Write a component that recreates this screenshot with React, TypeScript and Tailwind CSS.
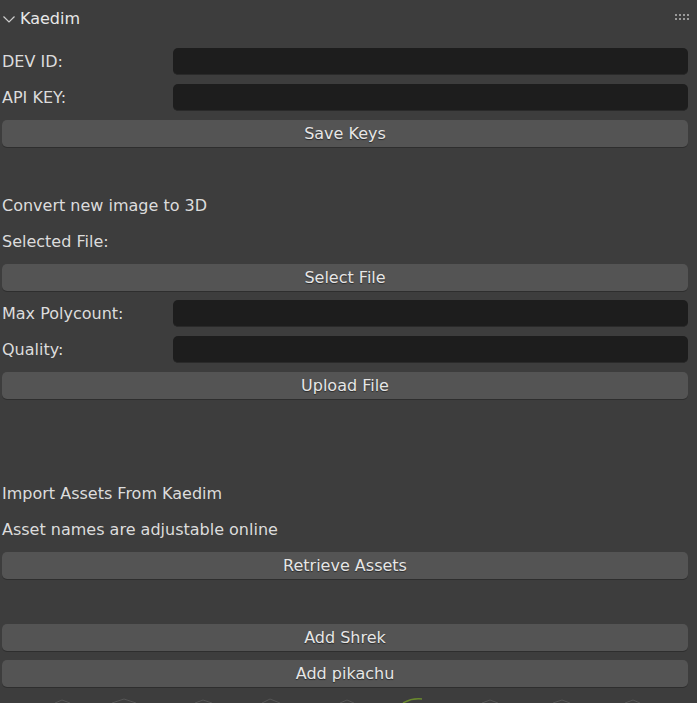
import React from "react";

const font = { fontFamily: '"DejaVu Sans", "Liberation Sans", sans-serif' };

function Label({ children }: { children: React.ReactNode }) {
  return <div className="h-[36px] flex items-center pt-[2px] text-[16px] text-[#dcdcdc]">{children}</div>;
}

function Field({ label }: { label: string }) {
  return (
    <div className="h-[36px] flex items-center">
      <div className="w-[171px] pt-[2px] text-[16px] text-[#dcdcdc]">{label}</div>
      <div className="flex-1 h-[27px] rounded-[5px] bg-[#1d1d1d] border-b border-[#2a2a2a]" />
    </div>
  );
}

function Button({ children }: { children: React.ReactNode }) {
  return (
    <div className="h-[36px] flex items-center">
      <div className="flex-1 h-[27px] rounded-[5px] bg-[#545454] shadow-[0_1px_0_#2e2e2e] flex items-center justify-center pt-[2px] text-[16px] text-[#e6e6e6] [text-shadow:0_1px_1px_rgba(0,0,0,0.5)]">
        {children}
      </div>
    </div>
  );
}

function Spacer() {
  return <div className="h-[36px]" />;
}

export default function App() {
  return (
    <div className="w-[697px] h-[703px] bg-[#3d3d3d] overflow-hidden flex flex-col" style={font}>
      <div className="h-[36px] flex items-center pl-[2px] pr-[8px] pt-[1px]">
        <svg width="14" height="14" viewBox="0 0 14 14" className="mr-[4px]">
          <path d="M1.5 4.5 L7 10 L12.5 4.5" fill="none" stroke="#cfcfcf" strokeWidth="1.2" />
        </svg>
        <span className="text-[16px] text-[#e8e8e8]">Kaedim</span>
        <div className="flex-1" />
        <div className="grid grid-cols-4 gap-x-[2px] gap-y-[2px] mt-[-4px]">
          {Array.from({ length: 8 }).map((_, i) => (
            <div key={i} className="w-[2px] h-[2px] bg-[#9a9a9a]" />
          ))}
        </div>
      </div>
      <div className="flex flex-col pl-[2px] pr-[9px] pt-[7px]">
        <Field label="DEV ID:" />
        <Field label="API KEY:" />
        <Button>Save Keys</Button>
        <Spacer />
        <Label>Convert new image to 3D</Label>
        <Label>Selected File:</Label>
        <Button>Select File</Button>
        <Field label="Max Polycount:" />
        <Field label="Quality:" />
        <Button>Upload File</Button>
        <Spacer />
        <Spacer />
        <Label>Import Assets From Kaedim</Label>
        <Label>Asset names are adjustable online</Label>
        <Button>Retrieve Assets</Button>
        <Spacer />
        <Button>Add Shrek</Button>
        <Button>Add pikachu</Button>
      </div>
      <svg width="697" height="12" viewBox="0 0 697 12" className="shrink-0">
        <path d="M55 12 L62 9 L70 12" fill="none" stroke="#555" strokeWidth="1" />
        <path d="M112 12 L124 8 L136 12" fill="none" stroke="#555" strokeWidth="1" />
        <path d="M195 12 L203 9 L212 12" fill="none" stroke="#555" strokeWidth="1" />
        <path d="M262 12 L270 8 L280 12" fill="none" stroke="#555" strokeWidth="1" />
        <path d="M340 12 L347 9 L354 12" fill="none" stroke="#555" strokeWidth="1" />
        <path d="M403 12 Q412 7 422 8" fill="none" stroke="#6a8a2e" strokeWidth="1.5" />
        <path d="M482 12 L490 9 L498 12" fill="none" stroke="#555" strokeWidth="1" />
        <path d="M553 12 L562 9 L570 12" fill="none" stroke="#555" strokeWidth="1" />
        <path d="M625 12 L633 9 L640 12" fill="none" stroke="#555" strokeWidth="1" />
      </svg>
    </div>
  );
}
